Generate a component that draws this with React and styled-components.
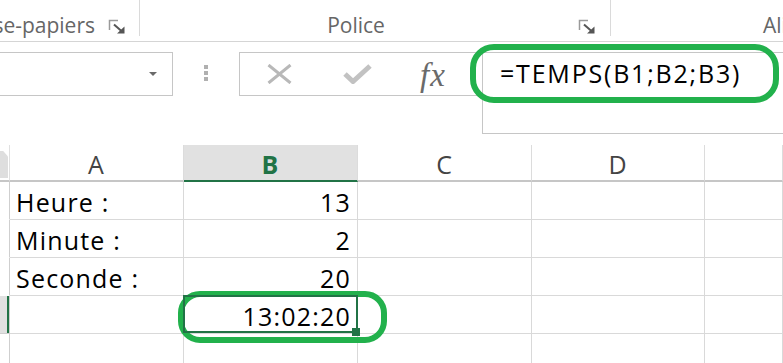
import React from 'react'
import styled, { createGlobalStyle } from 'styled-components'

const MARKER = '#22b14c'
const EXCEL_GREEN = '#217346'
const GRID_LINE = '#d9d9d9'

const GlobalStyle = createGlobalStyle`
  html, body {
    margin: 0;
    padding: 0;
    background: #fff;
    overflow: hidden;
  }
  body {
    font-family: "Open Sans", "Noto Sans", sans-serif;
    color: #000;
  }
`

const Page = styled.div`
  width: 783px;
  height: 363px;
  overflow: hidden;
  display: flex;
  flex-direction: column;
`

/* ribbon */

const Ribbon = styled.div`
  height: 41px;
  flex: none;
  display: flex;
  align-items: flex-start;
  border-bottom: 1px solid #d5d5d5;
`

const RibbonGroup = styled.div`
  width: ${p => p.$width ? `${p.$width}px` : 'auto'};
  flex: ${p => p.$grow ? 1 : 'none'};
  height: 36px;
  box-sizing: border-box;
  padding: 15px ${p => p.$padRight || 0}px 0 ${p => p.$padLeft || 0}px;
  display: flex;
  align-items: flex-start;
  justify-content: ${p => p.$justify || 'flex-start'};
  gap: ${p => p.$gap || 0}px;
  border-right: ${p => p.$last ? 'none' : '1px solid #dadada'};
`

const GroupLabel = styled.span`
  flex: ${p => p.$fill ? 1 : 'none'};
  text-align: center;
  font-size: 21px;
  line-height: 21px;
  color: #666;
  white-space: nowrap;
`

const LauncherIcon = styled.svg`
  flex: none;
  margin-top: 4px;
`

function Launcher() {
  return (
    <LauncherIcon width="18" height="15" viewBox="0 0 18 15">
      <path d="M1.5 11 V1.5 H10" fill="none" stroke="#9a9a9a" strokeWidth="1.5" />
      <path d="M6 5.5 L14 12.5" stroke="#555" strokeWidth="2" />
      <path d="M16.5 14.5 L9 14.5 L16.5 7.5 Z" fill="#555" />
    </LauncherIcon>
  )
}

/* formula row */

const FormulaRow = styled.div`
  height: 103px;
  flex: none;
  box-sizing: border-box;
  padding-top: 10px;
  display: flex;
  align-items: flex-start;
`

const NameBox = styled.div`
  width: 174px;
  height: 44px;
  margin-left: -1px;
  box-sizing: border-box;
  border: 1px solid #c6c6c6;
  display: flex;
  align-items: center;
  justify-content: flex-end;
  padding-right: 15px;
`

const DropArrow = styled.span`
  width: 0;
  height: 0;
  border-left: 4px solid transparent;
  border-right: 4px solid transparent;
  border-top: 4px solid #6a6a6a;
`

const Grip = styled.div`
  width: 4px;
  margin: 13px 0 0 31px;
  display: flex;
  flex-direction: column;
  gap: 2px;
`

const GripDot = styled.span`
  width: 4px;
  height: 4px;
  background: #b0b0b0;
`

const FormulaBar = styled.div`
  flex: 1;
  margin-left: 31px;
  margin-right: -10px;
  display: flex;
  align-items: flex-start;
`

const ButtonBox = styled.div`
  width: 243px;
  height: 44px;
  flex: none;
  box-sizing: border-box;
  border: 1px solid #c6c6c6;
  border-right: none;
  display: flex;
  align-items: center;
`

const IconSlot = styled.span`
  margin-left: ${p => p.$ml}px;
  display: flex;
  align-items: center;
`

const FxLabel = styled.span`
  margin-left: 48px;
  font-family: "Liberation Serif", "DejaVu Serif", serif;
  font-style: italic;
  font-size: 33px;
  line-height: 33px;
  letter-spacing: 1px;
  color: #6a6a6a;
  margin-top: 2px;
`

const InputBox = styled.div`
  position: relative;
  flex: 1;
  height: 82px;
  box-sizing: border-box;
  border: 1px solid #c6c6c6;
  padding: 8px 0 0 17px;
`

const FormulaText = styled.span`
  font-size: 25px;
  line-height: 25px;
  letter-spacing: 1.8px;
  white-space: nowrap;
`

const Marker = styled.div`
  position: absolute;
  left: ${p => p.$left}px;
  top: ${p => p.$top}px;
  width: ${p => p.$w}px;
  height: ${p => p.$h}px;
  box-sizing: border-box;
  border: 6px solid ${MARKER};
  border-radius: ${p => p.$radius}px;
  z-index: 2;
  pointer-events: none;
`

/* sheet */

const Sheet = styled.div`
  flex: 1;
  display: grid;
  grid-template-columns: 10px 174px 174px 174px 173px 1fr;
  grid-template-rows: 37px repeat(5, 38px);
`

const Corner = styled.div`
  box-sizing: border-box;
  border-right: 1px solid #e0e0e0;
  border-bottom: 2px solid #c6c6c6;
  padding: 6px 1px 2px 0;
  display: flex;
`

const CornerMark = styled.span`
  flex: 1;
  background: #dedede;
  clip-path: polygon(0 0, 40% 0, 100% 20%, 100% 100%, 0 100%);
`

const ColHeader = styled.div`
  box-sizing: border-box;
  background: ${p => p.$active ? '#e1e1e1' : '#fff'};
  border-right: 1px solid #dcdcdc;
  border-bottom: 2px solid ${p => p.$active ? EXCEL_GREEN : '#c6c6c6'};
  display: flex;
  align-items: center;
  justify-content: center;
  font-size: 25px;
  letter-spacing: 1px;
  padding-top: 2px;
  font-weight: ${p => p.$active ? 700 : 400};
  color: ${p => p.$active ? EXCEL_GREEN : '#444'};
`

const RowHeader = styled.div`
  box-sizing: border-box;
  background: ${p => p.$active ? '#e1e1e1' : '#fff'};
  border-right: 1px solid #cfcfcf;
  border-bottom: 1px solid ${p => p.$active ? '#cfcfcf' : '#fff'};
  box-shadow: ${p => p.$active ? `inset -2px 0 0 ${EXCEL_GREEN}` : 'none'};
`

const Cell = styled.div`
  position: relative;
  box-sizing: border-box;
  border-right: 1px solid ${GRID_LINE};
  border-bottom: 1px solid ${GRID_LINE};
  padding: 2px 6px 0;
  display: flex;
  align-items: center;
  justify-content: ${p => p.$right ? 'flex-end' : 'flex-start'};
  font-size: 25px;
  letter-spacing: 1.2px;
  white-space: nowrap;

  ${p => p.$selected && `
    &::before {
      content: '';
      position: absolute;
      inset: -1px -1px 0 -1px;
      border: 2px solid ${EXCEL_GREEN};
      z-index: 3;
    }
    &::after {
      content: '';
      position: absolute;
      right: -3px;
      bottom: -3px;
      width: 8px;
      height: 8px;
      background: ${EXCEL_GREEN};
      z-index: 4;
    }
  `}
`

const columns = ['A', 'B', 'C', 'D', '']

const rows = [
  ['Heure :', '13'],
  ['Minute :', '2'],
  ['Seconde :', '20'],
  ['', '13:02:20'],
  ['', ''],
]

function App() {
  return (
    <Page>
      <GlobalStyle />
      <Ribbon>
        <RibbonGroup $width={140} $justify="flex-end" $gap={13} $padRight={13}>
          <GroupLabel>Presse-papiers</GroupLabel>
          <Launcher />
        </RibbonGroup>
        <RibbonGroup $width={471} $gap={6} $padRight={14}>
          <GroupLabel $fill>Police</GroupLabel>
          <Launcher />
        </RibbonGroup>
        <RibbonGroup $grow $last $padLeft={152}>
          <GroupLabel>Alignement</GroupLabel>
        </RibbonGroup>
      </Ribbon>

      <FormulaRow>
        <NameBox>
          <DropArrow />
        </NameBox>
        <Grip>
          <GripDot />
          <GripDot />
          <GripDot />
        </Grip>
        <FormulaBar>
          <ButtonBox>
            <IconSlot $ml={27}>
              <svg width="25" height="20" viewBox="0 0 25 20">
                <path d="M1.5 1 L23.5 19 M23.5 1 L1.5 19" stroke="#b8b8b8" strokeWidth="3" />
              </svg>
            </IconSlot>
            <IconSlot $ml={51}>
              <svg width="29" height="20" viewBox="0 0 29 20">
                <path d="M2 10 L10 17.5 L27 2" fill="none" stroke="#c2c2c2" strokeWidth="5" />
              </svg>
            </IconSlot>
            <FxLabel>fx</FxLabel>
          </ButtonBox>
          <InputBox>
            <FormulaText>=TEMPS(B1;B2;B3)</FormulaText>
            <Marker $left={-13} $top={-9} $w={309} $h={59} $radius={24} />
          </InputBox>
        </FormulaBar>
      </FormulaRow>

      <Sheet>
        <Corner>
          <CornerMark />
        </Corner>
        {columns.map((c, i) => (
          <ColHeader key={i} $active={c === 'B'}>{c}</ColHeader>
        ))}
        {rows.map((r, ri) => (
          <React.Fragment key={ri}>
            <RowHeader $active={ri === 3} />
            <Cell>{r[0]}</Cell>
            <Cell $right $selected={ri === 3}>
              {r[1]}
              {ri === 3 && <Marker $left={-6} $top={-5} $w={209} $h={52} $radius={22} />}
            </Cell>
            <Cell />
            <Cell />
            <Cell />
          </React.Fragment>
        ))}
      </Sheet>
    </Page>
  )
}

export default App
